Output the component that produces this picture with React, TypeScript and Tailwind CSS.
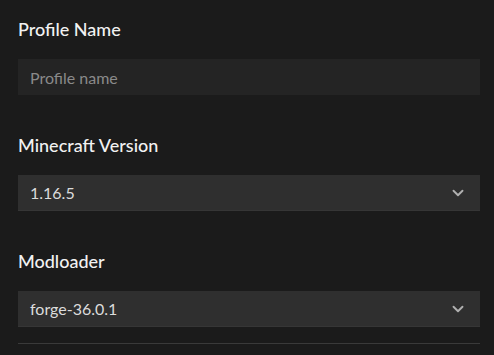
import { ChevronDown } from 'lucide-react';

function Field({ label, children }: { label: string; children: React.ReactNode }) {
  return (
    <div className="flex flex-col">
      <label className="text-[18px] leading-[28px] font-medium text-[#f2f2f2] mb-[16px]">{label}</label>
      {children}
    </div>
  );
}

function Select({ value }: { value: string }) {
  return (
    <div className="flex items-center justify-between h-[36px] bg-[#2f2f2f] border-b border-[#363636] pl-3 pr-[13px] text-[16px] text-[#dcdcdc]">
      <span>{value}</span>
      <ChevronDown size={18} strokeWidth={2.5} className="text-[#b0b0b0]" />
    </div>
  );
}

export default function App() {
  return (
    <div className="w-[494px] h-[355px] bg-[#1b1b1b] pl-[18px] pr-[14px] pt-[15px] overflow-hidden" style={{ fontFamily: 'Lato, "Open Sans", sans-serif' }}>
      <div className="flex flex-col gap-[36px]">
        <Field label="Profile Name">
          <input
            placeholder="Profile name"
            className="h-[36px] bg-[#242424] px-3 text-[16px] text-[#dcdcdc] placeholder:text-[#8a8a8a] outline-none"
          />
        </Field>
        <Field label="Minecraft Version">
          <Select value="1.16.5" />
        </Field>
        <Field label="Modloader">
          <Select value="forge-36.0.1" />
        </Field>
      </div>
      <div className="mt-[16px] h-px bg-[#3a3a3a]" />
    </div>
  );
}
